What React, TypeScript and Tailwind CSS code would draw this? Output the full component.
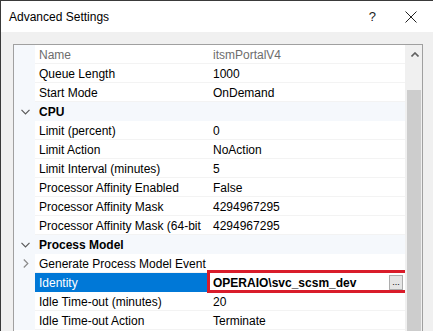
type Row =
  | { kind: 'prop'; name: string; value: string; dim?: boolean; expand?: boolean }
  | { kind: 'cat'; name: string }
  | { kind: 'sel'; name: string; value: string };

// names are cut where the grid's column clips them in the screenshot
const rows: Row[] = [
  { kind: 'prop', name: 'Name', value: 'itsmPortalV4', dim: true },
  { kind: 'prop', name: 'Queue Length', value: '1000' },
  { kind: 'prop', name: 'Start Mode', value: 'OnDemand' },
  { kind: 'cat', name: 'CPU' },
  { kind: 'prop', name: 'Limit (percent)', value: '0' },
  { kind: 'prop', name: 'Limit Action', value: 'NoAction' },
  { kind: 'prop', name: 'Limit Interval (minutes)', value: '5' },
  { kind: 'prop', name: 'Processor Affinity Enabled', value: 'False' },
  { kind: 'prop', name: 'Processor Affinity Mask', value: '4294967295' },
  { kind: 'prop', name: 'Processor Affinity Mask (64-bit', value: '4294967295' },
  { kind: 'cat', name: 'Process Model' },
  { kind: 'prop', name: 'Generate Process Model Event', value: '', expand: true },
  { kind: 'sel', name: 'Identity', value: 'OPERAIO\\svc_scsm_dev' },
  { kind: 'prop', name: 'Idle Time-out (minutes)', value: '20' },
  { kind: 'prop', name: 'Idle Time-out Action', value: 'Terminate' },
];

const ChevronDown = () => (
  <svg width="9" height="6" viewBox="0 0 9 6" className="text-[#5a5a5a]">
    <path d="M0.5 0.8 L4.5 4.8 L8.5 0.8" fill="none" stroke="currentColor" strokeWidth="1.2" />
  </svg>
);

const ChevronRight = () => (
  <svg width="6" height="9" viewBox="0 0 6 9" className="text-[#8a8a8a]">
    <path d="M0.8 0.5 L4.8 4.5 L0.8 8.5" fill="none" stroke="currentColor" strokeWidth="1.2" />
  </svg>
);

function GridRow({ row }: { row: Row }) {
  if (row.kind === 'cat') {
    return (
      <div className="flex h-[19px] bg-[#f5f8fc]">
        <div className="flex w-[21px] shrink-0 items-center justify-center pl-[1px]">
          <ChevronDown />
        </div>
        <div className="flex items-center pl-[4px] pt-[1px] font-bold text-black">{row.name}</div>
      </div>
    );
  }
  if (row.kind === 'sel') {
    return (
      <div className="relative flex h-[19px]">
        <div className="w-[21px] shrink-0 bg-[#f5f8fc]" />
        <div className="flex w-[172px] shrink-0 items-center bg-[#0078d7] pl-[4px] pt-[1px] text-white">
          {row.name}
        </div>
        <div className="flex flex-1 items-center pl-[6px] pt-[1px] font-bold text-black">{row.value}</div>
        <div className="absolute left-[193px] top-[-3px] h-[23px] w-[202px] border-[3px] border-[#d91c2a]" />
        <div className="absolute left-[375px] top-[2px] flex h-[15px] w-[14px] items-end justify-center border border-[#adadad] bg-[#e5e5e5] pb-[2px] text-[9px] leading-none text-black">
          ...
        </div>
      </div>
    );
  }
  const tone = row.dim ? 'text-[#6d6d6d]' : 'text-black';
  return (
    <div className="flex h-[19px]">
      <div className="flex w-[21px] shrink-0 items-center justify-center bg-[#f5f8fc] pl-[2px]">
        {row.expand && <ChevronRight />}
      </div>
      <div
        className={`flex w-[172px] shrink-0 items-center whitespace-nowrap border-b border-[#f3f3f3] pl-[4px] pt-[1px] ${tone}`}
      >
        {row.name}
      </div>
      <div className={`flex flex-1 items-center whitespace-nowrap border-b border-[#f3f3f3] pl-[6px] pt-[1px] ${tone}`}>
        {row.value}
      </div>
    </div>
  );
}

export default function App() {
  return (
    <div className="h-[331px] w-[433px] overflow-hidden border-l border-t border-[#3a3a3a] bg-[#f0f0f0] font-['Liberation_Sans',Arial,sans-serif] text-[12px] leading-none">
      <div className="flex h-[31px] items-center bg-white pl-[8px]">
        <span className="text-black">Advanced Settings</span>
        <span className="ml-auto mr-[29px] text-[13px] text-[#222]">?</span>
        <svg width="12" height="12" viewBox="0 0 12 12" className="mr-[16px]">
          <path d="M0.5 0.5 L11.5 11.5 M11.5 0.5 L0.5 11.5" stroke="#222" strokeWidth="1" />
        </svg>
      </div>
      <div className="pl-[12px] pt-[12px]">
        <div className="flex h-[300px] w-[410px] border border-[#a0a0a0] bg-white">
          <div className="flex-1 overflow-hidden">
            {rows.map((r, i) => (
              <GridRow key={i} row={r} />
            ))}
          </div>
          <div className="flex w-[17px] shrink-0 flex-col bg-[#f0f0f0]">
            <div className="flex h-[16px] items-center justify-center pl-[3px] pt-[2px]">
              <svg width="8" height="5" viewBox="0 0 8 5">
                <path d="M0.5 4.5 L4 1 L7.5 4.5" fill="none" stroke="#606060" strokeWidth="1.6" />
              </svg>
            </div>
            <div className="ml-[2px] mr-[1px] mt-[29px] flex-1 bg-[#cdcdcd]" />
          </div>
        </div>
      </div>
    </div>
  );
}
